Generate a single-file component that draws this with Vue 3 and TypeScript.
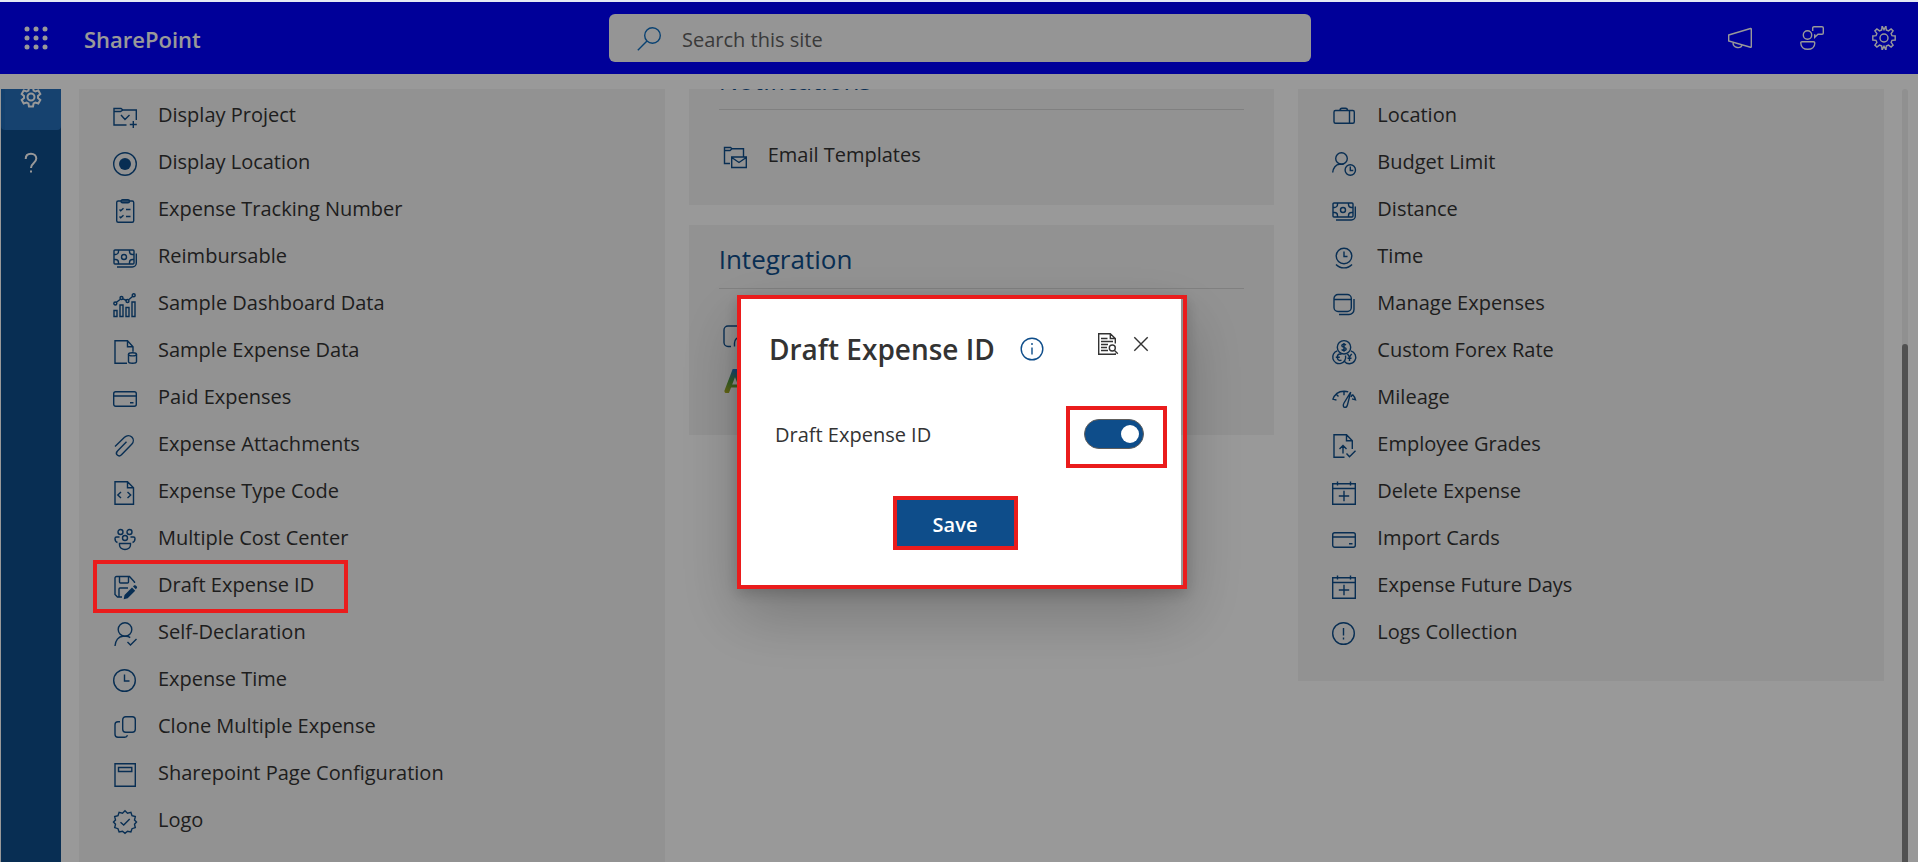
<script setup lang="ts">
import { ref } from 'vue'

interface Entry {
  label: string
  icon: string
  marked?: boolean
}

const cash =
  '<rect x="1" y="4" width="20" height="14" rx="1"/><circle cx="11" cy="11" r="2.5"/><path d="M5.5 4v1.5a3 3 0 0 1-3 3H1M16.5 4v1.5a3 3 0 0 0 3 3H21M5.5 18v-1.5a3 3 0 0 0-3-3H1M16.5 18v-1.5a3 3 0 0 1 3-3H21M23.3 7.5V17a4 4 0 0 1-4 4H4"/>'
const card =
  '<rect x=".7" y="4.7" width="22.6" height="14.6" rx="2"/><path d="M.7 9h22.6M17 15.8h3.5"/>'
const calendar =
  '<path d="M.7 2.7h22.6v20.6H.7zM.7 7.5h22.6M5.500.5v4M18.500.5v4M12 9.8v10.4M6.8 15h10.4"/>'

const icons: Record<string, string> = {
  folderCheck:
    '<path d="M13.5 20H1V3.5h7l2 1.5h13.3v10M1 6.5h6.5L10 5M8 10l4 4.5 4.5-4.5M20.3 16v7M16.8 19.5h7"/>',
  radio: '<circle cx="12" cy="12" r="11.3"/><circle cx="12" cy="12" r="6" fill="currentColor" stroke="none"/>',
  clipboard:
    '<rect x="3.7" y="2" width="17" height="21.3" rx="1.5"/><rect x="8" y=".7" width="8.5" height="3" rx="1.5"/><path d="M6.5 10.5l1.2 1.2 2.8-2.5M13 10.5h4.5M6.5 17.5l1.2 1.2 2.8-2.5M13 17.5h4.5"/>',
  cash,
  chart:
    '<path d="M1 17.5h3v6H1zM7 12h3v11.5H7zM13 14.5h3v9h-3zM19 9h3v14.5h-3zM3.5 9.3L7 6.5M10 5.8l3.5 1.7M16 6.5l3.5-3"/><circle cx="2.3" cy="10.5" r="1.5"/><circle cx="8.5" cy="5" r="1.5"/><circle cx="14.5" cy="8" r="1.5"/><circle cx="20.7" cy="2.2" r="1.5"/>',
  fileData:
    '<path d="M14 23.3H2V.7h12.5l5.5 6v5M14.500.7v6H20"/><ellipse cx="19.5" cy="14.3" rx="4" ry="1.6"/><path d="M15.5 14.3v7.2c0 2.4 8 2.4 8 0v-7.2"/>',
  card,
  clip: '<path d="M2 12.5L11.5 3.3c2.3-2.2 5.5-2 7.3-.3 1.9 1.9 2.1 5-.1 7.3L8.5 20.8c-1.4 1.4-3.1 1.3-4.2.3-1.1-1.1-1.2-2.8.2-4.2L13.5 7.8"/>',
  fileCode:
    '<path d="M2 .7h12.5l6 6v16.6H2zM14.500.7v6h6M8 11l-3.2 3L8 17M14.5 11l3.2 3-3.2 3"/>',
  people:
    '<circle cx="7.5" cy="4" r="2.5"/><circle cx="16.5" cy="4" r="2.5"/><circle cx="12" cy="10" r="2.5"/><path d="M6.5 15.5h11v1.5a5.5 4.5 0 0 1-11 0zM6.5 9h-3a1.5 1.5 0 0 0-1.5 1.5c0 2 1 3.5 2.5 4M17.5 9h3a1.5 1.5 0 0 1 1.5 1.5c0 2-1 3.5-2.5 4"/>',
  saveEdit:
    '<path d="M9 22H4.500L2 19.5V3a1.5 1.5 0 0 1 1.5-1.5h13l5 5.5v1M6.5 1.5v5.500a1 1 0 0 0 1 1h7a1 1 0 0 0 1-1V1.5M6 21.5V14a1 1 0 0 1 1-1h8"/><path d="M11.5 20l7.500-7.500 3.200 3.200-7.500 7.500-4 1zM20 11.500l1-1c1-.8 2 0 2.8.9.4.8.4 1.3-.1 1.9l-.9.9z" fill="currentColor" stroke="none"/>',
  personCheck:
    '<circle cx="12" cy="7.5" r="6.8"/><path d="M2 24c.3-5.5 3.5-9.7 8-9.7h3c1.5 0 3 .4 4.2 1.3M14.5 20l3 3 6-6"/>',
  clock: '<circle cx="11.5" cy="11.5" r="10.8"/><path d="M11.5 5.5v6.5h5"/>',
  clone:
    '<rect x="9.7" y=".7" width="12.6" height="15.6" rx="3"/><path d="M7 5.7H5a3 3 0 0 0-3 3v9.6a3 3 0 0 0 3 3h6.5a3 3 0 0 0 3-2"/>',
  page: '<path d="M2 .7h20.3v22.6H2zM5.5 4.5h13.3v4H5.500z"/>',
  badge:
    '<path d="M12 .8l2.5 2.4 3.4-.9 1.1 3.3 3.3 1-.8 3.4 2 2-2 2.3.8 3.3-3.3 1.1-1.1 3.3-3.400-.8L12 23.3l-2.5-2.1-3.4.8L5 18.7l-3.3-1.1.8-3.300-2-2.300 2-2-.8-3.400 3.300-1 1.100-3.300 3.400.9zM7.5 12.3l3.2 2.7 6-6"/>',
  folderMail:
    '<path d="M7 18.5H1.5V2.5h6l1.5 1.3h11.5v8M1.5 5.5h5.5l2-1.7M8.7 12h14.6v10.5H8.700zM8.700 12.5l7.3 5 7.3-5"/>',
  briefcase:
    '<path d="M8 5.5c0-1.5 1-2.3 2-2.3h3.5c1 0 2 .8 2 2.3M17.5 5.5v12.8"/><rect x="2" y="5.5" width="20.3" height="12.8" rx="1.5"/>',
  personClock:
    '<circle cx="9.5" cy="6.5" r="5.8"/><path d="M.7 20.5C1 16 4 12.3 7.5 12.3h4M18.3 14.5v4h3"/><circle cx="18.3" cy="18" r="5.2"/>',
  timer:
    '<circle cx="12" cy="10" r="7.8"/><path d="M12 5.5v5h3.5M4 18.5c4 4.5 12 4.5 16 0"/>',
  manage:
    '<rect x="2" y="1.5" width="17.3" height="17" rx="4"/><path d="M2 6.5h17.3M22 6v10.5a5 5 0 0 1-5 5H7"/>',
  forex:
    '<circle cx="12" cy="7.3" r="6.7"/><path d="M5.3 10.9A6.5 6.5 0 1 0 13.5 15.500M18.7 10.9A6.5 6.5 0 1 1 12.2 21.300M12 3v8.800M14 5c-1.500-1.300-4.200-1-4.200.7 0 2.100 4.400 1.200 4.400 3.400 0 1.900-3.200 1.900-4.600.5M9.500 14.300c-2.400-1-4.200.4-4.200 2.900s1.800 3.900 4.200 2.900M3.800 17.200h4M15.500 13.800l2 3.200 2.200-3.200M17.500 17v4M15.500 18.300h4"/>',
  gauge:
    '<path d="M.7 12.800C2.500 7.300 7 4.200 12 4.200c1.500 0 3 .2 4.200.7M.9 12l3.600 1.200M12 4.200v4M4.500 7.500l2 2M20.500 7.500c1.500 1.500 2.500 3.300 3 5.300l-3.500-1M20.500 7.500L19 9.800M18.700 5.200L12 16c-1.200 2-.8 4 .6 4.300 1.600.3 2.600-1 3-3z"/>',
  fileUp:
    '<path d="M12.5 23.3H2V.7h12.5l5.8 6V15M14.500.7v6h5.8M11 19.5v-8M7.5 15L11 11.500l3.500 3.500M14.500 19.500l3 3.300 6-6"/>',
  calendar,
  alert: '<circle cx="11.5" cy="11.5" r="10.8"/><path d="M11.5 6v7.5M11.5 15.5V17.5"/>',
  plug: '<path d="M8 21.5H5a4 4 0 0 1-4-4V5a4 4 0 0 1 4-4h14M11.5 21.5v-3.5a6 6 0 0 1 6-6"/>',
}

const displayItems: Entry[] = [
  { label: 'Display Project', icon: 'folderCheck' },
  { label: 'Display Location', icon: 'radio' },
  { label: 'Expense Tracking Number', icon: 'clipboard' },
  { label: 'Reimbursable', icon: 'cash' },
  { label: 'Sample Dashboard Data', icon: 'chart' },
  { label: 'Sample Expense Data', icon: 'fileData' },
  { label: 'Paid Expenses', icon: 'card' },
  { label: 'Expense Attachments', icon: 'clip' },
  { label: 'Expense Type Code', icon: 'fileCode' },
  { label: 'Multiple Cost Center', icon: 'people' },
  { label: 'Draft Expense ID', icon: 'saveEdit', marked: true },
  { label: 'Self-Declaration', icon: 'personCheck' },
  { label: 'Expense Time', icon: 'clock' },
  { label: 'Clone Multiple Expense', icon: 'clone' },
  { label: 'Sharepoint Page Configuration', icon: 'page' },
  { label: 'Logo', icon: 'badge' },
]

const expenseItems: Entry[] = [
  { label: 'Location', icon: 'briefcase' },
  { label: 'Budget Limit', icon: 'personClock' },
  { label: 'Distance', icon: 'cash' },
  { label: 'Time', icon: 'timer' },
  { label: 'Manage Expenses', icon: 'manage' },
  { label: 'Custom Forex Rate', icon: 'forex' },
  { label: 'Mileage', icon: 'gauge' },
  { label: 'Employee Grades', icon: 'fileUp' },
  { label: 'Delete Expense', icon: 'calendar' },
  { label: 'Import Cards', icon: 'card' },
  { label: 'Expense Future Days', icon: 'calendar' },
  { label: 'Logs Collection', icon: 'alert' },
]

const query = ref('')
const draftEnabled = ref(true)
const dots = [3, 12, 21]
</script>

<template>
  <div class="page">
    <header class="topbar">
      <div class="lead">
        <button class="bare" aria-label="App launcher">
          <svg viewBox="0 0 24 24" width="24" height="24" fill="currentColor">
            <template v-for="y in dots" :key="y">
              <circle v-for="x in dots" :key="x" :cx="x" :cy="y" r="2.5" />
            </template>
          </svg>
        </button>
        <a class="brand" href="#">SharePoint</a>
      </div>
      <label class="search">
        <svg class="line" viewBox="0 0 24 24" width="24" height="24">
          <circle cx="15.5" cy="8.5" r="7.8" /><path d="M10 14L.8 23.2" />
        </svg>
        <input v-model="query" type="search" placeholder="Search this site" aria-label="Search this site" />
      </label>
      <nav class="tools">
        <button class="bare" aria-label="Announcements">
          <svg class="line" viewBox="0 0 24 24" width="24" height="24">
            <path d="M.7 9L22.5 2.5c.5-.1.8.1.8.6v17.5c0 .5-.3.7-.8.6L.7 15zM5 16.5c0 6 8 6.5 9 2.3" />
          </svg>
        </button>
        <button class="bare" aria-label="Feedback">
          <svg class="line" viewBox="0 0 24 24" width="24" height="24">
            <circle cx="7.5" cy="9" r="4.2" />
            <path d="M2 15.7h11.5c.7 0 1.3.5 1.3 1.2 0 4-3 6.4-7 6.4s-7-2.4-7-6.4c0-.7.5-1.2 1.2-1.2zM12.7 5V2c0-.7.6-1.3 1.3-1.3h8c.7 0 1.3.6 1.3 1.3v5c0 .7-.6 1.3-1.3 1.3h-4l-3.3 3V8.3" />
          </svg>
        </button>
        <button class="bare" aria-label="Settings">
          <svg class="line" viewBox="0 0 24 24" width="24" height="24">
            <circle cx="12" cy="12" r="4" />
            <path d="M10 .8L9.7 4 7.5 4.9 4.9 2.9 2.9 4.9l2 2.6L4 9.7.8 10v4l3.2.3.9 2.2-2 2.6 2 2 2.6-2 2.2.9.3 3.2h.5L12 20.2l1.5 3 .5 0 .3-3.2 2.2-.9 2.6 2 2-2-2-2.6.9-2.2 3.2-.3v-4L20 9.7l-.9-2.2 2-2.6-2-2-2.6 2L14.3 4 14 .8h-.5L12 3.8 10.5.8z" />
          </svg>
        </button>
      </nav>
    </header>

    <div class="body">
      <aside class="rail">
        <a class="rail-item active" href="#" aria-label="Settings">
          <svg class="line bold" viewBox="0 0 24 24" width="24" height="24">
            <circle cx="12" cy="12" r="3.5" />
            <path d="M10 2.5h4l.6 3 1.8 1 2.9-1 2 3.5-2.3 2v2l2.3 2-2 3.5-2.9-1-1.8 1-.6 3h-4l-.6-3-1.8-1-2.9 1-2-3.5 2.3-2v-2l-2.3-2 2-3.5 2.9 1 1.8-1z" />
          </svg>
        </a>
        <a class="rail-item" href="#" aria-label="Help">
          <svg class="line bold" viewBox="0 0 24 24" width="24" height="24">
            <path d="M6.7 8c0-3.4 2.3-5.3 5.3-5.3s5.3 1.9 5.3 4.8c0 4.5-5.3 4.5-5.3 9.5M12 19.6v1.8" />
          </svg>
        </a>
      </aside>

      <main class="content">
        <div class="grid">
          <section class="card long">
            <ul>
              <li v-for="item in displayItems" :key="item.label">
                <a class="entry" :class="{ marked: item.marked }" href="#">
                  <svg class="line" viewBox="0 0 24 24" width="24" height="24" v-html="icons[item.icon]" />
                  {{ item.label }}
                </a>
              </li>
            </ul>
          </section>

          <div class="stack">
            <section class="card">
              <h2>Notifications</h2>
              <ul class="single">
                <li>
                  <a class="entry" href="#">
                    <svg class="line" viewBox="0 0 24 24" width="24" height="24" v-html="icons.folderMail" />
                    Email Templates
                  </a>
                </li>
              </ul>
            </section>
            <section class="card">
              <h2>Integration</h2>
              <ul class="pair">
                <li>
                  <a class="entry" href="#" aria-label="Connected app">
                    <svg class="line" viewBox="0 0 24 24" width="24" height="24" v-html="icons.plug" />
                  </a>
                </li>
                <li>
                  <a class="entry" href="#" aria-label="Accounting app">
                    <svg viewBox="0 0 24 24" width="24" height="24" fill="none" stroke="url(#leg)" stroke-width="5" stroke-linecap="round">
                      <defs>
                        <linearGradient id="leg" gradientUnits="userSpaceOnUse" x1="12" y1="0" x2="4" y2="24">
                          <stop offset="0" stop-color="#1f6fd0" />
                          <stop offset=".5" stop-color="#4f9a3c" />
                          <stop offset="1" stop-color="#a8a820" />
                        </linearGradient>
                      </defs>
                      <path d="M4 22L12 1l8 21" />
                      <path d="M7 17h9" stroke-width="3" />
                    </svg>
                  </a>
                </li>
              </ul>
            </section>
          </div>

          <section class="card long">
            <ul>
              <li v-for="item in expenseItems" :key="item.label">
                <a class="entry" href="#">
                  <svg class="line" viewBox="0 0 24 24" width="24" height="24" v-html="icons[item.icon]" />
                  {{ item.label }}
                </a>
              </li>
            </ul>
          </section>
        </div>
      </main>
      <div class="track"><div class="thumb" /></div>
    </div>

    <div class="overlay">
      <div class="frame">
        <div class="dialog" role="dialog" aria-modal="true" aria-labelledby="dialog-title">
          <div class="dialog-head">
            <h1 id="dialog-title">Draft Expense ID</h1>
            <button class="bare info" aria-label="Information">
              <svg class="line" viewBox="0 0 24 24" width="24" height="24">
                <circle cx="12" cy="12" r="10.8" /><path d="M12 10.5v7M12 6v2" />
              </svg>
            </button>
            <div class="dialog-actions">
              <button class="bare" aria-label="View log">
                <svg class="line" viewBox="0 0 20 22" width="20" height="22">
                  <path d="M17.3 10.5V5.5l-5-4.8H.7v20.600h16.600v-1M12.300.7v4.800h5M3 5.500h6.500M3 8.500h12M3 11.500h7M3 14.500h6M3 17.500h7M16.800 17.800l3 3" />
                  <circle cx="14.3" cy="15" r="3" />
                </svg>
              </button>
              <button class="bare" aria-label="Close">
                <svg class="line" viewBox="0 0 20 20" width="20" height="20">
                  <path d="M3.300 3.300l13.400 13.400M16.700 3.300L3.300 16.700" />
                </svg>
              </button>
            </div>
          </div>
          <div class="field">
            <label for="draft-toggle">Draft Expense ID</label>
            <span class="toggle-frame">
              <input id="draft-toggle" v-model="draftEnabled" type="checkbox" role="switch" />
            </span>
          </div>
          <div class="dialog-foot">
            <button class="save">Save</button>
          </div>
        </div>
      </div>
    </div>
  </div>
</template>

<style>
body {
  margin: 0;
}
</style>

<style scoped>
.page {
  --blue: #0e4d8a;
  --red: #ea1c1c;
  display: flex;
  flex-direction: column;
  box-sizing: border-box;
  height: 100vh;
  border-top: 2px solid #e4e8f4;
  overflow: hidden;
  background: #fff;
  color: #333;
  font-family: 'Open Sans', 'Noto Sans', sans-serif;
  font-size: 20px;
}

.line {
  flex: none;
  fill: none;
  stroke: currentColor;
  stroke-width: 1.4;
  overflow: visible;
}
.bold {
  stroke-width: 2;
}
.bare {
  display: flex;
  align-items: center;
  justify-content: center;
  padding: 0;
  border: 0;
  background: none;
  color: inherit;
}
a {
  color: inherit;
  text-decoration: none;
}
ul {
  margin: 0;
  padding: 0;
  list-style: none;
}

.topbar {
  display: grid;
  grid-template-columns: 1fr minmax(0, 702px) 1fr;
  align-items: center;
  flex: none;
  height: 72px;
  padding: 0 22px 0 24px;
  background: #00f;
  color: #fff;
}
.lead {
  display: flex;
  align-items: center;
  gap: 36px;
}
.brand {
  padding-top: 2px;
  font-size: 22px;
  font-weight: 600;
}
.search {
  display: flex;
  align-items: center;
  gap: 21px;
  box-sizing: border-box;
  height: 48px;
  padding: 2px 28px 0;
  border-radius: 6px;
  background: #f9f9f9;
  color: #106ebe;
}
.search input {
  flex: 1;
  min-width: 0;
  padding: 0;
  border: 0;
  outline: 0;
  background: none;
  color: #333;
  font: inherit;
}
.search input::placeholder {
  color: #616161;
  opacity: 1;
}
.tools {
  display: flex;
  justify-content: flex-end;
  gap: 48px;
}

.body {
  display: flex;
  flex: 1;
  min-height: 0;
  padding: 15px 10px 0 1px;
}
.rail {
  flex: none;
  width: 60px;
  overflow: hidden;
  background: var(--blue);
  color: #fff;
}
.rail-item {
  display: flex;
  align-items: center;
  justify-content: center;
  height: 66px;
}
.rail-item.active {
  box-sizing: border-box;
  margin: -25px 0 0;
  border-left: 4px solid #1f69b4;
  padding-right: 4px;
  border-radius: 0 0 4px 4px;
  background: #266eb9;
}
.content {
  flex: 1;
  min-width: 0;
  overflow: hidden;
}
.grid {
  display: grid;
  grid-template-columns: repeat(3, minmax(0, 1fr));
  align-items: start;
  gap: 24px;
  margin: -43px 18px 0;
}
.stack {
  display: grid;
  gap: 20px;
}
.card {
  padding: 0 30px;
  background: #f3f3f3;
}
.card.long {
  padding-top: 45px;
  padding-bottom: 26px;
}
.card.long li {
  height: 47px;
}
h2 {
  margin: 0;
  padding: 16px 0 10px;
  border-bottom: 1px solid #d6d6d6;
  color: var(--blue);
  font-size: 26px;
  font-weight: 400;
  line-height: 37px;
}
.single {
  padding: 21px 0 27px;
}
.pair {
  padding: 24px 0 34px;
}
.pair .entry {
  height: 44px;
}
.entry {
  display: inline-flex;
  align-items: center;
  gap: 21px;
  height: 47px;
  padding-left: 4px;
  white-space: nowrap;
}
.entry svg {
  margin-top: 4px;
  color: var(--blue);
}
.marked {
  position: relative;
}
.marked::after {
  position: absolute;
  inset: -1px -34px -5px -16px;
  z-index: 20;
  border: 4px solid var(--red);
  content: '';
}
.track {
  flex: none;
  width: 6px;
  border-radius: 3px 3px 0 0;
  background: #f0f0f0;
}
.thumb {
  height: 67%;
  margin-top: 255px;
  border-radius: 3px 3px 0 0;
  background: #888;
}

.overlay {
  position: fixed;
  inset: 2px 0 0;
  z-index: 10;
  display: flex;
  align-items: center;
  justify-content: center;
  padding: 20px 0 0 6px;
  background: rgba(0, 0, 0, 0.4);
}
.frame {
  padding-right: 2px;
  border: 4px solid var(--red);
  box-shadow: 0 26px 58px rgba(0, 0, 0, 0.22), 0 5px 14px rgba(0, 0, 0, 0.18);
}
.dialog {
  width: 440px;
  padding: 30px 0 35px;
  box-sizing: border-box;
  background: #fff;
}
.dialog-head {
  display: flex;
  align-items: center;
  padding: 0 30px 0 28px;
}
h1 {
  margin: 0;
  font-size: 28px;
  font-weight: 600;
  line-height: 40px;
}
.info {
  margin-left: 25px;
  color: var(--blue);
}
.dialog-actions {
  display: flex;
  align-self: flex-start;
  gap: 13px;
  height: 30px;
  margin-left: auto;
}
.field {
  display: flex;
  align-items: center;
  justify-content: space-between;
  height: 60px;
  margin-top: 35px;
  padding: 0 37px 0 34px;
}
.toggle-frame {
  position: relative;
  display: flex;
}
.toggle-frame::after {
  position: absolute;
  inset: -13px -23px -19px -18px;
  border: 4px solid var(--red);
  content: '';
  pointer-events: none;
}
.field input {
  display: flex;
  align-items: center;
  box-sizing: border-box;
  width: 60px;
  height: 30px;
  margin: 0;
  padding: 0 4px;
  border: 1px solid #605e5c;
  border-radius: 15px;
  background: #fff;
  appearance: none;
}
.field input::before {
  width: 18px;
  height: 18px;
  border-radius: 50%;
  background: #605e5c;
  content: '';
}
.field input:checked {
  justify-content: flex-end;
  background: var(--blue);
}
.field input:checked::before {
  background: #fff;
}
.dialog-foot {
  display: flex;
  justify-content: center;
  margin-top: 32px;
  padding-right: 12px;
}
.save {
  width: 125px;
  height: 54px;
  padding: 2px 0 0;
  border: 4px solid var(--red);
  background: var(--blue);
  color: #fff;
  font: inherit;
  font-weight: 600;
}
</style>
